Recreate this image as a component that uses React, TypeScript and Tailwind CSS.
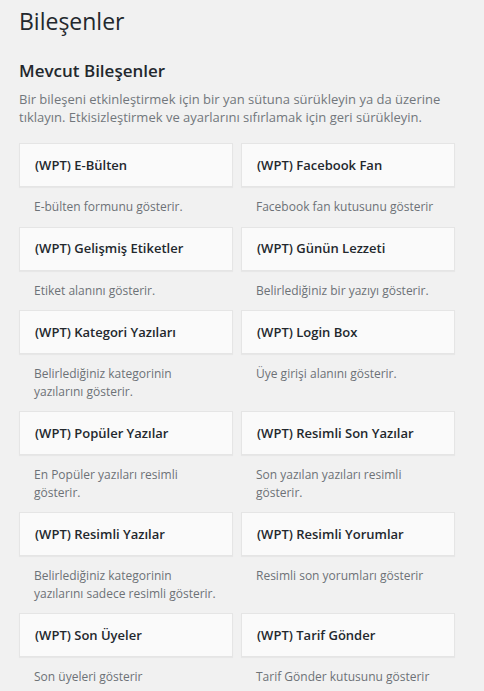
import React from "react";

const widgets: [string, string][] = [
  ["(WPT) E-Bülten", "E-bülten formunu gösterir."],
  ["(WPT) Facebook Fan", "Facebook fan kutusunu gösterir"],
  ["(WPT) Gelişmiş Etiketler", "Etiket alanını gösterir."],
  ["(WPT) Günün Lezzeti", "Belirlediğiniz bir yazıyı gösterir."],
  ["(WPT) Kategori Yazıları", "Belirlediğiniz kategorinin yazılarını gösterir."],
  ["(WPT) Login Box", "Üye girişi alanını gösterir."],
  ["(WPT) Popüler Yazılar", "En Popüler yazıları resimli gösterir."],
  ["(WPT) Resimli Son Yazılar", "Son yazılan yazıları resimli gösterir."],
  ["(WPT) Resimli Yazılar", "Belirlediğiniz kategorinin yazılarını sadece resimli gösterir."],
  ["(WPT) Resimli Yorumlar", "Resimli son yorumları gösterir"],
  ["(WPT) Son Üyeler", "Son üyeleri gösterir"],
  ["(WPT) Tarif Gönder", "Tarif Gönder kutusunu gösterir"],
];

export default function App() {
  return (
    <div
      className="min-h-[691px] w-full bg-[#f1f1f1] pl-[19px] pt-[3px]"
      style={{ fontFamily: '"Open Sans", sans-serif' }}
    >
      <h1 className="text-[23px] leading-[36px] font-normal text-[#23282d]">Bileşenler</h1>
      <h2 className="mt-[20px] text-[17px] leading-[24px] font-semibold text-[#23282d]">Mevcut Bileşenler</h2>
      <p className="mt-[7px] w-[440px] text-[13px] leading-[18px] text-[#72777c]">
        Bir bileşeni etkinleştirmek için bir yan sütuna sürükleyin ya da üzerine tıklayın. Etkisizleştirmek ve ayarlarını sıfırlamak için geri sürükleyin.
      </p>
      <div className="mt-[17px] grid w-[436px] grid-cols-2 gap-x-[8px]">
        {widgets.map(([title, desc]) => (
          <div key={title} className="flex flex-col">
            <div className="flex h-[44px] items-center border border-[#e5e5e5] bg-[#fafafa] px-[15px] shadow-[0_1px_1px_rgba(0,0,0,0.04)]">
              <h3 className="text-[13px] leading-none font-semibold text-[#23282d]">{title}</h3>
            </div>
            <div className="pl-[15px] pr-[10px] pt-[11px] pb-[11px] text-[12px] leading-[17.5px] text-[#6d7277]">
              {desc}
            </div>
          </div>
        ))}
      </div>
    </div>
  );
}
